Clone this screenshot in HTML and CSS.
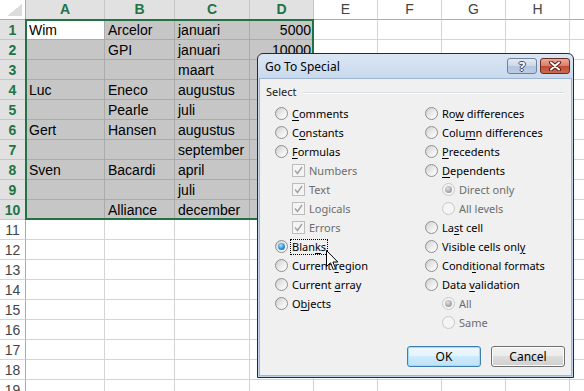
FILE: index.html
```html
<!DOCTYPE html>
<html lang="nl">
<head>
  <meta charset="UTF-8">
  <title>Go To Special</title>
  <link rel="stylesheet" href="styles.css">
</head>
<body>
  <div class="sheet">
    <div class="grid" id="grid"></div>
    <div class="selection"></div>

    <div class="dialog">
      <div class="titlebar">
        <span class="title">Go To Special</span>
        <span class="tb-btn help">?</span>
        <span class="tb-btn close">
          <svg width="14" height="10" viewBox="0 0 14 10">
            <path d="M3 1.5 L11 8.5 M11 1.5 L3 8.5" stroke="#5a1a10" stroke-width="4" stroke-linecap="round"/>
            <path d="M3 1.5 L11 8.5 M11 1.5 L3 8.5" stroke="#fff" stroke-width="2" stroke-linecap="round"/>
          </svg>
        </span>
      </div>

      <div class="client">
        <div class="group-label"><span>Select</span><i class="rule"></i></div>

        <div class="options">
          <div class="opt-col left">
            <div class="opt"><span class="radio"></span><span><u>C</u>omments</span></div>
            <div class="opt"><span class="radio"></span><span>C<u>o</u>nstants</span></div>
            <div class="opt"><span class="radio"></span><span><u>F</u>ormulas</span></div>
            <div class="opt sub dis"><span class="check"><svg viewBox="0 0 11 11"><path d="M2 5.5 L4.5 8.5 L9 2"/></svg></span><span>Numbers</span></div>
            <div class="opt sub dis"><span class="check"><svg viewBox="0 0 11 11"><path d="M2 5.5 L4.5 8.5 L9 2"/></svg></span><span>Text</span></div>
            <div class="opt sub dis"><span class="check"><svg viewBox="0 0 11 11"><path d="M2 5.5 L4.5 8.5 L9 2"/></svg></span><span>Logicals</span></div>
            <div class="opt sub dis"><span class="check"><svg viewBox="0 0 11 11"><path d="M2 5.5 L4.5 8.5 L9 2"/></svg></span><span>Errors</span></div>
            <div class="opt"><span class="radio on"></span><span class="focus">Blan<u>k</u>s</span></div>
            <div class="opt"><span class="radio"></span><span>Current <u>r</u>egion</span></div>
            <div class="opt"><span class="radio"></span><span>Current <u>a</u>rray</span></div>
            <div class="opt"><span class="radio"></span><span>O<u>b</u>jects</span></div>
          </div>
          <div class="opt-col">
            <div class="opt"><span class="radio"></span><span>Ro<u>w</u> differences</span></div>
            <div class="opt"><span class="radio"></span><span>Colu<u>m</u>n differences</span></div>
            <div class="opt"><span class="radio"></span><span><u>P</u>recedents</span></div>
            <div class="opt"><span class="radio"></span><span><u>D</u>ependents</span></div>
            <div class="opt sub dis"><span class="radio on"></span><span>Direct only</span></div>
            <div class="opt sub dis"><span class="radio"></span><span>All levels</span></div>
            <div class="opt"><span class="radio"></span><span>La<u>s</u>t cell</span></div>
            <div class="opt"><span class="radio"></span><span>Visible cells onl<u>y</u></span></div>
            <div class="opt"><span class="radio"></span><span>Condi<u>t</u>ional formats</span></div>
            <div class="opt"><span class="radio"></span><span>Data <u>v</u>alidation</span></div>
            <div class="opt sub dis"><span class="radio on"></span><span>All</span></div>
            <div class="opt sub dis"><span class="radio"></span><span>Same</span></div>
          </div>
        </div>

        <div class="buttons">
          <button class="btn default">OK</button>
          <button class="btn">Cancel</button>
        </div>
      </div>
    </div>

    <svg class="cursor" width="13" height="21" viewBox="0 0 13 21">
      <path d="M0.5 0.5 V16.5 L4.5 12.8 L7.3 19.5 L9.6 18.5 L6.9 12 H11.8 Z" fill="#fff" stroke="#000" stroke-width="1" stroke-linejoin="miter"/>
    </svg>
  </div>

<script>
  const cols = ['A', 'B', 'C', 'D', 'E', 'F', 'G', 'H', 'I'];
  const data = [
    ['Wim', 'Arcelor', 'januari', '5000'],
    ['', 'GPI', 'januari', '10000'],
    ['', '', 'maart', ''],
    ['Luc', 'Eneco', 'augustus', ''],
    ['', 'Pearle', 'juli', ''],
    ['Gert', 'Hansen', 'augustus', ''],
    ['', '', 'september', ''],
    ['Sven', 'Bacardi', 'april', ''],
    ['', '', 'juli', ''],
    ['', 'Alliance', 'december', '']
  ];

  const grid = document.getElementById('grid');
  let html = '<div class="corner"></div>';

  // kolomkoppen
  cols.forEach((c, i) => {
    html += `<div class="col-hdr${i < 4 ? ' sel' : ''}">${c}</div>`;
  });

  // rijen 1 t/m 19
  for (let r = 1; r <= 19; r++) {
    const inSel = r <= 10;
    html += `<div class="row-hdr${inSel ? ' sel' : ''}">${r}</div>`;
    cols.forEach((c, i) => {
      let cls = 'cell';
      let val = '';
      if (inSel && i < 4) {
        cls += (r === 1 && i === 0) ? ' active' : ' sel';
        val = data[r - 1][i];
      }
      if (i === 3) cls += ' num';
      html += `<div class="${cls}">${val}</div>`;
    });
  }

  grid.innerHTML = html;
</script>
</body>
</html>
```

FILE: styles.css
```css
* {
  box-sizing: border-box;
}

body {
  margin: 0;
  overflow: hidden;
  background: #fff;
  font-family: 'Liberation Sans', Arial, sans-serif;
}

.sheet {
  position: relative;
  width: 584px;
  height: 391px;
  overflow: hidden;
}

/* spreadsheet */
.grid {
  display: grid;
  grid-template-columns: 26px 79px 70px 75px 64px 64px 64px 64px 64px 64px;
  grid-auto-rows: 20px;
}

.grid > div {
  border-right: 1px solid #d4d4d4;
  border-bottom: 1px solid #d4d4d4;
  font-size: 14px;
  line-height: 20px;
  padding: 0 3px;
  white-space: nowrap;
  overflow: hidden;
  color: #000;
}

.grid > .corner {
  position: relative;
  border-right-color: #ababab;
  border-bottom-color: #ababab;
}

.corner::after {
  content: '';
  position: absolute;
  right: 3px;
  bottom: 3px;
  width: 15px;
  height: 12px;
  background: linear-gradient(to bottom right, transparent 50%, #dcdcdc 50%);
}

.grid > .col-hdr {
  text-align: center;
  line-height: 19px;
  color: #444;
  border-bottom-color: #ababab;
}

.grid > .col-hdr.sel {
  background: #e1e1e1;
  color: #217346;
  font-weight: bold;
  border-right-color: #c6c6c6;
}

.grid > .row-hdr {
  text-align: center;
  padding: 0;
  color: #444;
  border-right-color: #ababab;
}

.grid > .row-hdr.sel {
  background: #e1e1e1;
  color: #217346;
  font-weight: bold;
  border-bottom-color: #c6c6c6;
}

.grid > .cell.sel {
  background: #c6c6c6;
  border-color: #ababab;
}

.grid > .cell.active {
  background: #fff;
  border-color: #ababab;
}

.grid > .num {
  text-align: right;
  padding-right: 2px;
}

.selection {
  position: absolute;
  left: 25px;
  top: 19px;
  width: 289px;
  height: 201px;
  border: 2px solid #217346;
}

/* dialog */
.dialog {
  position: absolute;
  left: 257px;
  top: 53px;
  width: 317px;
  height: 325px;
  display: flex;
  flex-direction: column;
  padding: 0 1px 1px;
  border: 1px solid #2a2a2a;
  border-radius: 6px 6px 0 0;
  background: linear-gradient(#dbe6f3, #c9d9ed 24px, #bfd3ec);
  font-family: 'Noto Sans', 'Open Sans', sans-serif;
  font-size: 11px;
  color: #000;
}

.titlebar {
  height: 24px;
  display: flex;
  align-items: flex-start;
  padding: 4px 2px 0 6px;
  gap: 3px;
}

.title {
  flex: 1;
  line-height: 17px;
  font-size: 12px;
}

.tb-btn {
  width: 30px;
  height: 16px;
  border-radius: 3px;
  display: flex;
  align-items: center;
  justify-content: center;
}

.help {
  border: 1px solid #6f829a;
  background: linear-gradient(#e3ebf5, #cbd8e8 50%, #b3c6de 50%, #bccde3);
  color: #fff;
  font-weight: bold;
  font-size: 13px;
  line-height: 14px;
  text-shadow: 1px 0 0 #3b4a5e, -1px 0 0 #3b4a5e, 0 1px 0 #3b4a5e, 0 -1px 0 #3b4a5e;
}

.close {
  border: 1px solid #6b2a1f;
  background: linear-gradient(#e9a999, #d77e6a 50%, #c14a33 50%, #cc6a50);
}

.client {
  flex: 1;
  background: #f0f0f0;
  border: 1px solid #9fb6d2;
  padding: 5px 6px 0 6px;
}

.group-label {
  display: flex;
  align-items: center;
  line-height: 16px;
  color: #1a1a1a;
}

.rule {
  flex: 1;
  margin: 1px 0 0 6px;
  border-top: 1px solid #d5dfe5;
  border-bottom: 1px solid #fff;
}

.options {
  display: flex;
  margin: 4px 0 0 9px;
}

.opt-col.left {
  width: 150px;
}

.opt {
  height: 19px;
  display: flex;
  align-items: center;
  white-space: nowrap;
}

.opt.sub {
  padding-left: 17px;
}

.opt.dis {
  color: #6d6d6d;
}

u {
  text-underline-offset: 2px;
}

.radio {
  position: relative;
  flex: none;
  width: 13px;
  height: 13px;
  margin-right: 4px;
  border-radius: 50%;
  border: 1px solid #8e8f8f;
  background: linear-gradient(135deg, #cfcfcf, #f0f0f0 60%, #fdfdfd);
}

.radio.on::after {
  content: '';
  position: absolute;
  left: 2px;
  top: 2px;
  width: 7px;
  height: 7px;
  border-radius: 50%;
  background: radial-gradient(circle at 40% 35%, #a8e6ff, #2b8fd6 55%, #144f8e);
}

.dis .radio {
  border-color: #c8c8c8;
  background: #f4f4f4;
}

.dis .radio.on::after {
  background: radial-gradient(circle at 40% 35%, #e0e0e0, #a8a8a8 60%, #8f8f8f);
}

.check {
  flex: none;
  width: 13px;
  height: 13px;
  margin-right: 4px;
  border: 1px solid #bcbcbc;
  background: #f4f4f4;
}

.check svg {
  display: block;
  width: 11px;
  height: 11px;
  fill: none;
  stroke: #a2a2a2;
  stroke-width: 1.4;
}

.focus {
  margin-left: -2px;
  padding: 0 1px;
  line-height: 14px;
  border: 1px dotted #000;
}

.buttons {
  display: flex;
  justify-content: flex-end;
  gap: 10px;
  margin-top: 14px;
}

.btn {
  width: 74px;
  height: 21px;
  padding: 0;
  font: inherit;
  font-size: 12px;
  color: #000;
  border: 1px solid #707070;
  border-radius: 3px;
  box-shadow: inset 0 0 0 1px #fcfcfc;
  background: linear-gradient(#f2f2f2, #ebebeb 50%, #dddddd 50%, #cfcfcf);
}

.btn.default {
  border-color: #3c7fb1;
  box-shadow: inset 0 0 0 1px #9fdcf9;
  background: linear-gradient(#eef7fd, #e3f2fc 50%, #cfeafc 50%, #c0e2f7);
}

.cursor {
  position: absolute;
  left: 326px;
  top: 250px;
}
```
